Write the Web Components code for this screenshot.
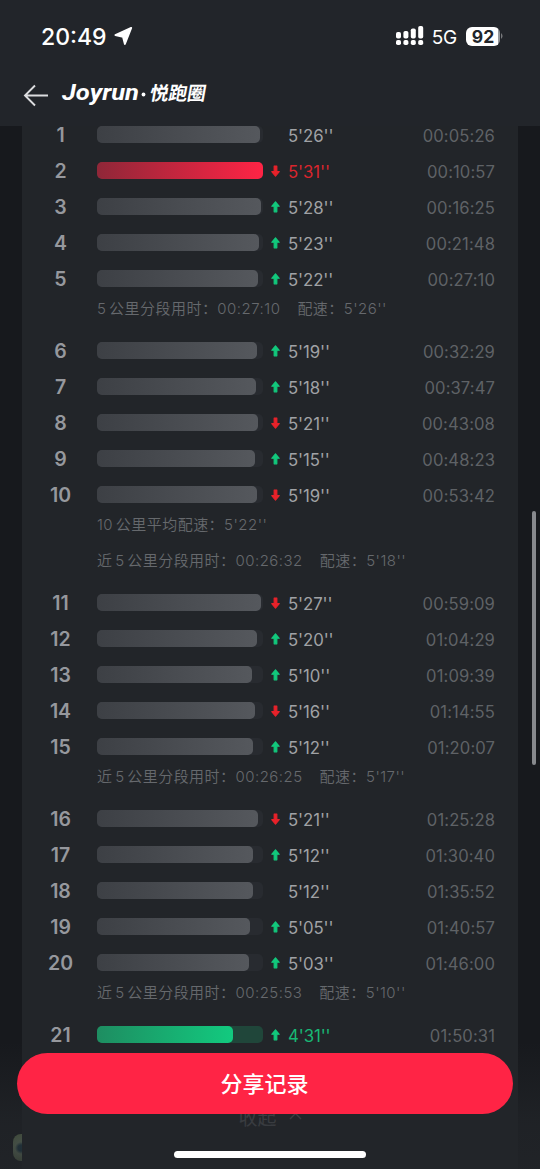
<!DOCTYPE html>
<html lang="zh-CN">
<head>
<meta charset="UTF-8">
<title>Joyrun</title>
<style>
  body {
    margin: 0;
    background: #17191d;
    font-family: Inter, "Noto Sans CJK SC", sans-serif;
  }
</style>
</head>
<body>
<run-screen></run-screen>

<script>
class StatusBar extends HTMLElement {
  constructor() {
    super();
    this.attachShadow({ mode: "open" }).innerHTML = `
    <style>
      :host {
        display: flex;
        align-items: center;
        justify-content: space-between;
        height: 72px;
        padding: 0 37px 0 41px;
        box-sizing: border-box;
        color: #fff;
      }
      div {
        display: flex;
        align-items: center;
      }
      .time {
        font-size: 23px;
        font-weight: 550;
        letter-spacing: 0;
        margin: 1px 7px 0 0;
      }
      .net {
        font-size: 19px;
        margin: 2px 9px 0 8px;
        letter-spacing: -0.2px;
      }
      .battery {
        width: 34px;
        height: 19px;
        border-radius: 6px;
        background: linear-gradient(90deg, #fff 31.5px, #96989b 31.5px);
        color: #22252a;
        font-size: 17.5px;
        font-weight: 700;
        line-height: 19px;
        justify-content: center;
      }
      svg { display: block; }
    </style>
    <div>
      <span class="time">20:49</span>
      <svg width="19" height="20" viewBox="0 0 19 20"><path d="M17.2 1.9 1.4 9.1 9 10.7 10.9 18Z" fill="#fff" stroke="#fff" stroke-width="1.9" stroke-linejoin="round"/></svg>
    </div>
    <div>
      <svg width="28" height="20" viewBox="0 0 28 20" fill="#fff">
        <rect x="0" y="6" width="5" height="6.5" rx="1.8"/>
        <rect x="7.4" y="5" width="5" height="7.5" rx="1.8"/>
        <rect x="14.8" y="2.5" width="5" height="10" rx="1.8"/>
        <rect x="22.2" y="0" width="5" height="12.5" rx="1.8"/>
        <rect x="0" y="14" width="5" height="5" rx="1.8"/>
        <rect x="7.4" y="14" width="5" height="5" rx="1.8"/>
        <rect x="14.8" y="14" width="5" height="5" rx="1.8"/>
        <rect x="22.2" y="14" width="5" height="5" rx="1.8"/>
      </svg>
      <span class="net">5G</span>
      <div class="battery">92</div>
      <svg width="3" height="8" viewBox="0 0 3 8"><path d="M1 1Q4.2 4 1 7Z" fill="#77797c"/></svg>
    </div>
  `;
  }
}
customElements.define("status-bar", StatusBar);

class NavHeader extends HTMLElement {
  constructor() {
    super();
    this.attachShadow({ mode: "open" }).innerHTML = `
    <style>
      :host {
        display: flex;
        align-items: flex-start;
        height: 54px;
        padding: 4px 0 0 23px;
        box-sizing: border-box;
      }
      .back { margin-top: 8px; }
      .logo { margin-left: 10px; }
    </style>
    <svg class="back" width="28" height="23" viewBox="0 0 28 23" fill="none" stroke="#dcdddf" stroke-width="1.9"><path d="M25 11.5H2M12 1.5 2 11.5l10 10"/></svg>
    <svg class="logo" width="150" height="36" viewBox="0 0 150 36" fill="#fff">
      <text x="1" y="24" font-family="Roboto" font-size="22.5" font-weight="700" font-style="italic" textLength="77" lengthAdjust="spacingAndGlyphs">Joyrun</text>
      <circle cx="82.5" cy="18.5" r="1.9"/>
      <text transform="translate(88 23.5) skewX(-10)" font-family="Noto Sans CJK SC" font-size="18.7" font-weight="700" textLength="56" lengthAdjust="spacingAndGlyphs">悦跑圈</text>
    </svg>
  `;
  }
}
customElements.define("nav-header", NavHeader);

// slowest lap fills the whole track
const SLOWEST = 331;

class LapRow extends HTMLElement {
  connectedCallback() {
    const pace = this.getAttribute("pace");
    const [min, sec] = pace.split(":").map(Number);
    const trend = this.getAttribute("trend");
    const width = ((min * 60 + sec) / SLOWEST) * 100;
    const arrows = {
      up: `<path d="M5.5.3 9.4 5H6.9V10.8H4.1V5H1.6Z" fill="#12c87c" stroke="#12c87c" stroke-width="1.2" stroke-linejoin="round"/>`,
      down: `<path d="M5.5 11 9.4 6.3H6.9V.5H4.1V6.3H1.6Z" fill="#e8222a" stroke="#e8222a" stroke-width="1.2" stroke-linejoin="round"/>`
    };
    this.attachShadow({ mode: "open" }).innerHTML = `
    <style>
      :host {
        --from: #3d4045;
        --to: #55585d;
        --track: #282b30;
        --pace: #a0a2a5;
        display: grid;
        grid-template-columns: 78px 166px 25px 1fr auto;
        align-items: center;
        height: 36px;
        padding-right: 23px;
        margin-left: -3px;
      }
      :host([kind="slow"]) {
        --from: #8f2738;
        --to: #ff2445;
        --pace: #d9252d;
      }
      :host([kind="fast"]) {
        --from: #1e8d61;
        --to: #12ca7f;
        --track: #20463a;
        --pace: #18b875;
      }
      .num {
        font-size: 19.5px;
        font-weight: 600;
        line-height: 17px;
        color: #96989d;
        text-align: center;
        padding-left: 5px;
        margin-top: 1px;
      }
      .track {
        height: 17px;
        border-radius: 5px;
        background: var(--track);
        margin-top: -1px;
      }
      .bar {
        height: 100%;
        border-radius: 5px;
        background: linear-gradient(90deg, var(--from), var(--to));
      }
      svg {
        display: block;
        margin-left: 7px;
      }
      .pace {
        font-size: 16.8px;
        line-height: 17px;
        letter-spacing: -0.1px;
        margin-top: 2px;
        color: var(--pace);
      }
      .total {
        font-size: 16.6px;
        line-height: 17px;
        letter-spacing: 0.1px;
        margin-top: 2px;
        color: #5f6266;
      }
    </style>
    <span class="num">${this.getAttribute("km")}</span>
    <div class="track"><div class="bar" style="width:${width}%"></div></div>
    <svg width="11" height="12" viewBox="0 -.5 11 12.5">${arrows[trend] || ""}</svg>
    <span class="pace">${min}'${String(sec).padStart(2, "0")}''</span>
    <span class="total">${this.getAttribute("total")}</span>
  `;
  }
}
customElements.define("lap-row", LapRow);

class LapNote extends HTMLElement {
  constructor() {
    super();
    this.attachShadow({ mode: "open" }).innerHTML = `
    <style>
      :host {
        display: flex;
        height: 36px;
        padding-left: 75px;
        line-height: 24px;
        font-size: 15px;
        font-weight: 350;
        letter-spacing: 0.47px;
        word-spacing: -2px;
        color: #66696d;
        white-space: pre;
        gap: 17px;
      }
    </style>
    <slot></slot>
  `;
  }
}
customElements.define("lap-note", LapNote);

class LapCard extends HTMLElement {
  constructor() {
    super();
    this.attachShadow({ mode: "open" }).innerHTML = `
    <style>
      :host {
        display: flow-root;
        margin: 0 22px;
        height: 1043px;
        background: #222529;
      }
      .rows { margin-top: -9px; }
      .fold {
        display: flex;
        justify-content: center;
        align-items: center;
        gap: 12px;
        height: 36px;
        margin-top: 45px;
        font-size: 19px;
        color: #777a7e;
      }
      .fold svg { margin-bottom: 1px; }
    </style>
    <div class="rows"><slot></slot></div>
    <div class="fold">收起<svg width="13" height="8" viewBox="0 0 13 8" fill="none" stroke="#777a7e" stroke-width="1.3"><path d="M1 7 6.5 1.5 12 7"/></svg></div>
  `;
  }
}
customElements.define("lap-card", LapCard);

class ShareFooter extends HTMLElement {
  constructor() {
    super();
    this.attachShadow({ mode: "open" }).innerHTML = `
    <style>
      :host {
        display: flex;
        flex-direction: column;
        align-items: center;
        height: 127px;
        padding-top: 10.5px;
        box-sizing: border-box;
        background: linear-gradient(rgba(34, 37, 41, 0), rgba(34, 37, 41, 0.72) 60%, rgba(34, 37, 41, 0.86));
      }
      button {
        width: 496px;
        height: 61px;
        border: 0;
        border-radius: 31px;
        background: #ff2445;
        color: #fff;
        font: 500 22px Inter, "Noto Sans CJK SC", sans-serif;
        padding: 0 0 3px 0;
        margin-right: 11px;
      }
      .home {
        width: 192px;
        height: 7px;
        border-radius: 4px;
        background: #fff;
        margin-top: 37.5px;
      }
    </style>
    <button>分享记录</button>
    <div class="home"></div>
  `;
  }
}
customElements.define("share-footer", ShareFooter);

const LAPS = [
  { km: 1, pace: "5:26", total: "00:05:26" },
  { km: 2, pace: "5:31", total: "00:10:57", trend: "down", kind: "slow" },
  { km: 3, pace: "5:28", total: "00:16:25", trend: "up" },
  { km: 4, pace: "5:23", total: "00:21:48", trend: "up" },
  { km: 5, pace: "5:22", total: "00:27:10", trend: "up" },
  { note: ["5 公里分段用时：00:27:10", "配速：5'26''"] },
  { km: 6, pace: "5:19", total: "00:32:29", trend: "up" },
  { km: 7, pace: "5:18", total: "00:37:47", trend: "up" },
  { km: 8, pace: "5:21", total: "00:43:08", trend: "down" },
  { km: 9, pace: "5:15", total: "00:48:23", trend: "up" },
  { km: 10, pace: "5:19", total: "00:53:42", trend: "down" },
  { note: ["10 公里平均配速：5'22''"] },
  { note: ["近 5 公里分段用时：00:26:32", "配速：5'18''"] },
  { km: 11, pace: "5:27", total: "00:59:09", trend: "down" },
  { km: 12, pace: "5:20", total: "01:04:29", trend: "up" },
  { km: 13, pace: "5:10", total: "01:09:39", trend: "up" },
  { km: 14, pace: "5:16", total: "01:14:55", trend: "down" },
  { km: 15, pace: "5:12", total: "01:20:07", trend: "up" },
  { note: ["近 5 公里分段用时：00:26:25", "配速：5'17''"] },
  { km: 16, pace: "5:21", total: "01:25:28", trend: "down" },
  { km: 17, pace: "5:12", total: "01:30:40", trend: "up" },
  { km: 18, pace: "5:12", total: "01:35:52" },
  { km: 19, pace: "5:05", total: "01:40:57", trend: "up" },
  { km: 20, pace: "5:03", total: "01:46:00", trend: "up" },
  { note: ["近 5 公里分段用时：00:25:53", "配速：5'10''"] },
  { km: 21, pace: "4:31", total: "01:50:31", trend: "up", kind: "fast" }
];

class RunScreen extends HTMLElement {
  constructor() {
    super();
    const shadowRoot = this.attachShadow({ mode: "open" });
    const rows = LAPS.map((lap) => {
      if (lap.note) {
        return `<lap-note>${lap.note.map((t) => `<span>${t}</span>`).join("")}</lap-note>`;
      }
      return `<lap-row km="${lap.km}" pace="${lap.pace}" total="${lap.total}" trend="${lap.trend || ""}" kind="${lap.kind || ""}"></lap-row>`;
    }).join("");
    shadowRoot.innerHTML = `
    <style>
      :host {
        display: block;
        position: relative;
        width: 540px;
        height: 1169px;
        overflow: hidden;
        background: #17191d;
      }
      header { background: #22252a; }
      .avatar {
        position: absolute;
        left: 13px;
        top: 1134px;
        width: 9px;
        height: 27px;
        border-radius: 8px 0 0 8px;
        background: radial-gradient(circle at 8px 14px, #1c5a70 3px, #c4e8b0 6px, #9cc070);
      }
      .scrollbar {
        position: absolute;
        left: 531.5px;
        top: 511px;
        width: 4.5px;
        height: 254px;
        border-radius: 3px;
        background: #87898d;
      }
      share-footer {
        position: absolute;
        left: 0;
        right: 0;
        bottom: 0;
      }
    </style>
    <header>
      <status-bar></status-bar>
      <nav-header></nav-header>
    </header>
    <lap-card>${rows}</lap-card>
    <div class="avatar"></div>
    <div class="scrollbar"></div>
    <share-footer></share-footer>
  `;
  }
}
customElements.define("run-screen", RunScreen);
</script>
</body>
</html>
